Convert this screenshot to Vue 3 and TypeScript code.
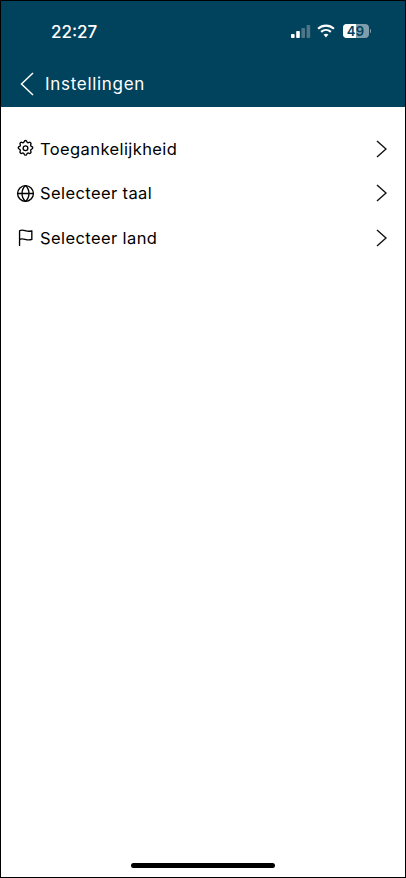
<script setup lang="ts">
interface Row { label: string; icon: 'gear' | 'globe' | 'flag' }
const rows: Row[] = [
  { label: 'Toegankelijkheid', icon: 'gear' },
  { label: 'Selecteer taal', icon: 'globe' },
  { label: 'Selecteer land', icon: 'flag' },
]
</script>

<template>
  <div class="screen">
    <header class="header">
      <div class="status">
        <span class="time">22:27</span>
        <div class="indicators">
          <svg class="signal" width="20" height="13" viewBox="0 0 20 13">
            <rect x="0" y="9" width="3.6" height="4" rx="0.8" fill="#fff" />
            <rect x="5.2" y="6" width="3.6" height="7" rx="0.8" fill="#fff" />
            <rect x="10.4" y="3" width="3.6" height="10" rx="0.8" fill="#4f7688" />
            <rect x="15.6" y="0" width="3.6" height="13" rx="0.8" fill="#4f7688" />
          </svg>
          <svg class="wifi" width="18" height="14" viewBox="0 0 17 13">
            <path d="M1 4.4C5.3.4 11.7.4 16 4.4" fill="none" stroke="#fff" stroke-width="2" />
            <path d="M3.9 7.3c2.7-2.4 6.5-2.4 9.2 0" fill="none" stroke="#fff" stroke-width="2" />
            <path d="M6.2 9.9c1.4-1.1 3.2-1.1 4.6 0L8.5 12.6z" fill="#fff" />
          </svg>
          <div class="battery">
            <div class="battery-body">
              <div class="battery-fill"></div>
              <span class="battery-text">49</span>
            </div>
            <div class="battery-cap"></div>
          </div>
        </div>
      </div>
      <div class="nav">
        <svg class="back" width="14" height="24" viewBox="0 0 14 24">
          <path d="M13 1 1.5 12 13 23" fill="none" stroke="#fff" stroke-width="1.5" />
        </svg>
        <h1 class="title">Instellingen</h1>
      </div>
    </header>

    <main class="list">
      <div v-for="row in rows" :key="row.label" class="row">
        <svg class="row-icon" width="19" height="19" viewBox="0 0 24 24" fill="none" stroke="#000" stroke-width="1.7" stroke-linecap="round" stroke-linejoin="round">
          <template v-if="row.icon === 'gear'">
            <path d="M10.3 3.3c.4-1.8 3-1.8 3.4 0a1.7 1.7 0 0 0 2.6 1.1c1.5-1 3.4.9 2.5 2.5a1.7 1.7 0 0 0 1 2.6c1.8.4 1.8 3 0 3.4a1.7 1.7 0 0 0-1 2.6c.9 1.5-1 3.4-2.5 2.5a1.7 1.7 0 0 0-2.6 1c-.4 1.8-3 1.8-3.4 0a1.7 1.7 0 0 0-2.6-1c-1.5.9-3.4-1-2.5-2.5a1.7 1.7 0 0 0-1-2.6c-1.8-.4-1.8-3 0-3.4a1.7 1.7 0 0 0 1-2.6c-.9-1.6 1-3.5 2.5-2.5a1.7 1.7 0 0 0 2.6-1.1z" />
            <circle cx="12" cy="11.6" r="3" />
          </template>
          <template v-else-if="row.icon === 'globe'">
            <circle cx="12" cy="12" r="10" />
            <path d="M2 12h20" />
            <path d="M12 2c3 2.8 4.4 6.2 4.4 10S15 19.2 12 22c-3-2.8-4.4-6.2-4.4-10S9 4.8 12 2z" />
          </template>
          <template v-else>
            <path d="M4.5 22V3.5c5-3 8.5 2.5 15.5 0v11c-7 2.5-10.5-3-15.5 0" />
          </template>
        </svg>
        <span class="label">{{ row.label }}</span>
        <svg class="chevron" width="11" height="18" viewBox="0 0 11 18">
          <path d="M1 1l9 8-9 8" fill="none" stroke="#111" stroke-width="1.4" />
        </svg>
      </div>
    </main>

    <div class="home-bar"></div>
  </div>
</template>

<style>
html, body { margin: 0; padding: 0; background: #fff; }
</style>

<style scoped>
.screen {
  width: 406px;
  height: 878px;
  box-sizing: border-box;
  border: 1px solid #000;
  display: flex;
  flex-direction: column;
  background: #fff;
  font-family: "Inter", "Liberation Sans", sans-serif;
  overflow: hidden;
}
.header {
  height: 106px;
  flex: none;
  background: #01425c;
  color: #fff;
  display: flex;
  flex-direction: column;
}
.status {
  display: flex;
  align-items: center;
  justify-content: space-between;
  padding: 19px 34px 0 50px;
  height: 22px;
}
.time {
  font-size: 17px;
  font-weight: 500;
  line-height: 22px;
  padding-top: 1px;
}
.indicators {
  display: flex;
  align-items: center;
  gap: 6px;
}
.wifi { margin-right: 2px; }
.battery {
  display: flex;
  align-items: center;
  gap: 1px;
}
.battery-body {
  position: relative;
  width: 26px;
  height: 14px;
  border-radius: 4px;
  background: #7f9dab;
  overflow: hidden;
  display: flex;
  align-items: center;
  justify-content: center;
}
.battery-fill {
  position: absolute;
  inset: 0 50% 0 0;
  background: #fff;
}
.battery-text {
  position: relative;
  font-size: 13px;
  font-weight: 600;
  letter-spacing: 0.3px;
  color: #01425c;
}
.battery-cap {
  width: 1.5px;
  height: 4px;
  border-radius: 0 1px 1px 0;
  background: #7f9dab;
}
.nav {
  display: flex;
  align-items: center;
  gap: 11px;
  padding: 30px 0 0 19px;
}
.title {
  margin: 0;
  font-size: 17px;
  font-weight: 400;
  letter-spacing: 0.7px;
  line-height: 24px;
}
.list {
  display: flex;
  flex-direction: column;
  padding-top: 19.5px;
  flex: 1;
}
.row {
  height: 44.5px;
  display: flex;
  align-items: center;
  padding: 0 18px 0 15px;
}
.row-icon { flex: none; }
.label {
  margin-left: 5px;
  font-size: 16.5px;
  letter-spacing: 0.4px;
  color: #000;
  flex: 1;
}
.home-bar {
  width: 144px;
  height: 5px;
  border-radius: 3px;
  background: #000;
  margin: 0 auto 9px;
  flex: none;
}
</style>
